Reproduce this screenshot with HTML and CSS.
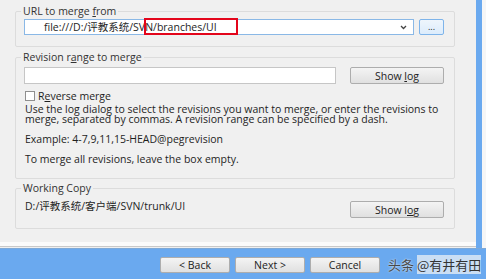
FILE: index.html
```html
<!DOCTYPE html>
<html lang="en">
<head>
    <meta charset="UTF-8">
    <meta name="viewport" content="width=device-width, initial-scale=1.0">
    <title>Merge</title>
    <link rel="stylesheet" href="styles.css">
</head>
<body>

<div class="window">
    <div class="main">
        <div class="pane">
            <fieldset class="group group-url">
                <legend>URL to merge <u>f</u>rom</legend>
                <div class="row">
                    <div class="combo">
                        <span class="combo-text">file:///D:/评教系统/SVN/branches/UI</span>
                        <svg class="arrow" width="7" height="5" viewBox="0 0 7 5"><path d="M1 1 L3.5 3.5 L6 1" fill="none" stroke="#444" stroke-width="1.3"/></svg>
                    </div>
                    <button type="button" class="btn btn-browse">...</button>
                </div>
                <span class="highlight"></span>
            </fieldset>

            <fieldset class="group group-range">
                <legend>Revision r<u>a</u>nge to merge</legend>
                <div class="row">
                    <input type="text" class="field">
                    <button type="button" class="btn btn-log">Show <u>l</u>og</button>
                </div>
                <label class="check"><input type="checkbox"> R<u>e</u>verse merge</label>
                <p class="hint">Use the log dialog to select the revisions you want to merge, or enter the revisions to<br>merge, separated by commas. A revision range can be specified by a dash.<br><br>Example: 4-7,9,11,15-HEAD@pegrevision<br><br>To merge all revisions, leave the box empty.</p>
            </fieldset>

            <fieldset class="group group-wc">
                <legend>Working Copy</legend>
                <div class="row row-wc">
                    <span class="path">D:/评教系统/客户端/SVN/trunk/UI</span>
                    <button type="button" class="btn btn-log">Show l<u>o</u>g</button>
                </div>
            </fieldset>

            <div class="sep"></div>
        </div>
        <div class="strip"></div>
        <div class="rim"></div>
    </div>

    <div class="footer">
        <button type="button" class="btn btn-nav">&lt; Back</button>
        <button type="button" class="btn btn-nav">Next &gt;</button>
        <button type="button" class="btn btn-nav">Cancel</button>
    </div>

    <div class="watermark"><span class="wm-a">头条</span> <span class="wm-b">@有井有田</span></div>
</div>

</body>
</html>
```

FILE: styles.css
```css
body { margin: 0; background-color: #f0f0f0; font-family: "Open Sans", "Noto Sans CJK SC", sans-serif; font-size: 10.5px; color: #1e1e1e; }
.window { position: relative; width: 486px; height: 279px; display: flex; flex-direction: column; overflow: hidden; }
.main { display: flex; height: 248px; flex: none; }
.pane { width: 476px; padding-left: 15px; box-sizing: border-box; display: flex; flex-direction: column; }
.strip { width: 6px; background-color: #6aa9ef; }
.rim { flex: 1; background-color: #f6f6f6; }

.group { position: relative; margin: 0 21px 0 0; border: 1px solid #dcdcdc; border-radius: 2px; padding: 0 10px 0 8px; min-width: 0; }
.group legend { padding: 0 2px; margin-left: -3px; line-height: 12px; color: #333; }
.group-url { margin-top: 5px; padding-top: 2px; padding-bottom: 11px; }
.group-range { margin-top: 4px; padding-top: 4px; padding-bottom: 14px; }
.group-wc { margin-top: 3px; padding-top: 6px; padding-bottom: 10px; }

.row { display: flex; align-items: center; }
.combo { flex: 1; height: 16px; box-sizing: border-box; border: 1px solid #8ab8e6; background-color: #fff; display: flex; align-items: center; padding: 0 6px 0 19px; }
.combo-text { flex: 1; line-height: 14px; }
.arrow { display: block; }
.highlight { position: absolute; left: 128px; top: 1px; width: 94px; height: 17px; box-sizing: border-box; border: 2px solid #e3051b; }

.btn { font: inherit; color: #222; padding: 0; box-sizing: border-box; border: 1px solid #adadad; border-radius: 2px; background: linear-gradient(#f4f4f4, #e0e0e0); cursor: pointer; }
.btn-browse { width: 25px; height: 16px; margin-left: 5px; border-color: #7eb4ea; background: linear-gradient(#eef5fc, #dcecfc); font-size: 9px; line-height: 10px; }
.btn-log { width: 94px; height: 17px; margin-left: 14px; }
.field { flex: 1; height: 17px; box-sizing: border-box; border: 1px solid #c6c6c6; background-color: #fff; margin: 0; padding: 0 3px; font: inherit; }

.check { display: flex; align-items: center; height: 12px; margin-top: 6px; margin-left: 1px; line-height: 12px; }
.check input { appearance: none; width: 10px; height: 10px; margin: 0 3px 0 0; border: 1px solid #8f8f8f; background-color: #fff; }
.hint { margin: 2px 0 0 1px; line-height: 10px; }

.row-wc { align-items: flex-start; justify-content: space-between; }
.path { margin-left: 1px; line-height: 12px; }
.row-wc .btn-log { margin-top: 1px; }

.sep { margin: auto 0 1px -15px; height: 4px; background-color: #fbfbfb; border-bottom: 1px solid #c9c9c9; }

.footer { flex: 1; display: flex; gap: 5px; padding: 8px 0 0 160px; background-color: #6aa9ef; border-top: 1px solid #7fa9d6; }
.btn-nav { width: 70px; height: 16px; line-height: 14px; }

.watermark { position: absolute; left: 388px; top: 256px; font-size: 13px; line-height: 18px; font-family: "Noto Sans CJK SC", sans-serif; white-space: nowrap; }
.wm-a { color: #4a4a4a; text-shadow: 0 0 2px #fff; }
.wm-b { color: #333; background-color: rgba(235, 240, 246, 0.75); }
```
